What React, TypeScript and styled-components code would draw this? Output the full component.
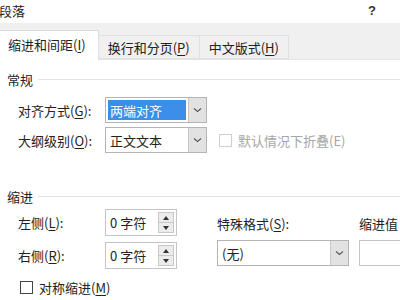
import * as React from 'react'
import styled, { createGlobalStyle } from 'styled-components'

const Global = createGlobalStyle`
  html, body { margin: 0; padding: 0; background: #fff; }
  body {
    width: 400px;
    height: 300px;
    overflow: hidden;
    font-family: "Noto Sans CJK SC", "Microsoft YaHei", sans-serif;
    font-size: 13px;
    color: #1a1a1a;
  }
`

function Chevron() {
    return (
        <svg width="9" height="6" viewBox="0 0 9 6">
            <path d="M1 1.5 L4.5 4.5 L8 1.5" fill="none" stroke="#555" strokeWidth="1.1" />
        </svg>
    )
}

function Combo({ value, width, selected }: { value: string; width: number; selected?: boolean }) {
    return (
        <ComboBox style={{ width }}>
            <ComboText $selected={selected}>
                <span>{value}</span>
            </ComboText>
            <DropButton>
                <Chevron />
            </DropButton>
        </ComboBox>
    )
}

function Spin({ value }: { value: string }) {
    return (
        <SpinBox>
            <SpinText>{value}</SpinText>
            <SpinButtons>
                <SpinHalf>
                    <svg width="6" height="4" viewBox="0 0 6 4"><path d="M0 4 L3 0 L6 4 Z" fill="#333" /></svg>
                </SpinHalf>
                <SpinHalf>
                    <svg width="6" height="4" viewBox="0 0 6 4"><path d="M0 0 L3 4 L6 0 Z" fill="#333" /></svg>
                </SpinHalf>
            </SpinButtons>
        </SpinBox>
    )
}

function App() {
    return (
        <Dialog>
            <Global />
            <TitleBar>
                <Title>段落</Title>
                <Help>?</Help>
            </TitleBar>
            <TabStrip>
                <Tab $active>缩进和间距(<u>I</u>)</Tab>
                <Tab>换行和分页(<u>P</u>)</Tab>
                <Tab>中文版式(<u>H</u>)</Tab>
            </TabStrip>
            <Content>
                <GroupHead>
                    <span>常规</span>
                    <Rule />
                </GroupHead>
                <FieldRow>
                    <Label>对齐方式(<u>G</u>):</Label>
                    <Combo value="两端对齐" width={102} selected />
                </FieldRow>
                <FieldRow $gap={4}>
                    <Label>大纲级别(<u>O</u>):</Label>
                    <Combo value="正文文本" width={102} />
                    <CheckLabel $disabled>
                        <Box $disabled />
                        <span>默认情况下折叠(E)</span>
                    </CheckLabel>
                </FieldRow>

                <GroupHead $top={36}>
                    <span>缩进</span>
                    <Rule />
                </GroupHead>
                <IndentGrid>
                    <SideCol>
                        <FieldRow $gap={0}>
                            <Label>左侧(<u>L</u>):</Label>
                            <Spin value="0 字符" />
                        </FieldRow>
                        <FieldRow $gap={6}>
                            <Label>右侧(<u>R</u>):</Label>
                            <Spin value="0 字符" />
                        </FieldRow>
                    </SideCol>
                    <StackCol $left={40}>
                        <SmallLabel>特殊格式(<u>S</u>):</SmallLabel>
                        <Combo value="(无)" width={132} />
                    </StackCol>
                    <StackCol $left={10}>
                        <SmallLabel>缩进值</SmallLabel>
                        <EmptyBox />
                    </StackCol>
                </IndentGrid>
                <CheckLabel $top={9} $left={20}>
                    <Box />
                    <span>对称缩进(<u>M</u>)</span>
                </CheckLabel>
            </Content>
        </Dialog>
    )
}

export default App

const Dialog = styled.div`
    width: 400px;
    height: 300px;
    overflow: hidden;
    background: #fff;
`
const TitleBar = styled.div`
    height: 23px;
    display: flex;
    align-items: center;
    justify-content: space-between;
    padding: 0 24px 2px 0;
    box-sizing: border-box;
`
const Title = styled.div`
    margin-left: -1px;
    font-size: 13px;
    color: #222;
`
const Help = styled.div`
    font-family: "Liberation Sans", Arial, sans-serif;
    font-size: 13px;
    font-weight: bold;
    color: #333;
`
const TabStrip = styled.div`
    height: 37px;
    background: #f0f0f0;
    display: flex;
    align-items: flex-end;
    border-bottom: 1px solid #e3e3e3;
    box-sizing: border-box;
`
const Tab = styled.div<{ $active?: boolean }>`
    height: ${p => (p.$active ? 30 : 24)}px;
    margin-bottom: ${p => (p.$active ? -1 : 0)}px;
    padding: ${p => (p.$active ? '0 12px 0 8px' : '0 9px')};
    display: flex;
    align-items: center;
    padding-bottom: ${p => (p.$active ? 3 : 0)}px;
    box-sizing: border-box;
    background: ${p => (p.$active ? '#fff' : '#f0f0f0')};
    border: 1px solid ${p => (p.$active ? '#d9d9d9' : '#e0e0e0')};
    border-bottom: ${p => (p.$active ? 'none' : '1px solid #e0e0e0')};
    border-left: ${p => (p.$active ? 'none' : '1px solid #e0e0e0')};
    margin-left: ${p => (p.$active ? 0 : -1)}px;
    font-size: 13px;
    color: #222;
    u { text-underline-offset: 2px; }
`
const Content = styled.div`
    padding: 12px 0 0 0;
`
const GroupHead = styled.div<{ $top?: number }>`
    display: flex;
    align-items: center;
    gap: 5px;
    height: 14px;
    margin-top: ${p => p.$top ?? 0}px;
    padding-left: 7px;
    color: #222;
`
const Rule = styled.div`
    flex: 1;
    height: 1px;
    background: #e3e3e3;
`
const FieldRow = styled.div<{ $gap?: number }>`
    display: flex;
    align-items: center;
    margin-top: ${p => p.$gap ?? 11}px;
    padding-left: 18px;
`
const Label = styled.div`
    width: 87px;
    color: #222;
    u { text-underline-offset: 2px; }
`
const SmallLabel = styled.div`
    height: 17px;
    line-height: 17px;
    margin-bottom: 8px;
    white-space: nowrap;
    color: #222;
    u { text-underline-offset: 2px; }
`
const ComboBox = styled.div`
    height: 26px;
    display: flex;
    border: 1px solid #b4b4b4;
    box-sizing: border-box;
    background: #fff;
`
const ComboText = styled.div<{ $selected?: boolean }>`
    flex: 1;
    padding: 2px;
    display: flex;
    span {
        flex: 1;
        display: flex;
        align-items: center;
        padding-left: 2px;
        background: ${p => (p.$selected ? '#3b8fe8' : 'transparent')};
        color: ${p => (p.$selected ? '#fff' : '#222')};
    }
`
const DropButton = styled.div`
    width: 17px;
    display: flex;
    align-items: center;
    justify-content: center;
    background: #e2e2e2;
    border-left: 1px solid #c8c8c8;
`
const CheckLabel = styled.label<{ $disabled?: boolean; $top?: number; $left?: number }>`
    display: flex;
    align-items: center;
    gap: 6px;
    margin-left: ${p => p.$left ?? 12}px;
    margin-top: ${p => p.$top ?? 0}px;
    color: ${p => (p.$disabled ? '#a6a6a6' : '#222')};
    u { text-underline-offset: 2px; }
`
const Box = styled.span<{ $disabled?: boolean }>`
    width: 11px;
    height: 11px;
    border: 1px solid ${p => (p.$disabled ? '#cfcfcf' : '#444')};
    background: #fff;
`
const IndentGrid = styled.div`
    display: flex;
    margin-top: 6px;
`
const SideCol = styled.div`
    display: flex;
    flex-direction: column;
`
const StackCol = styled.div<{ $left: number }>`
    display: flex;
    flex-direction: column;
    margin-left: ${p => p.$left}px;
    padding-top: 6px;
`
const SpinBox = styled.div`
    width: 72px;
    height: 27px;
    display: flex;
    border: 1px solid #c4c4c4;
    box-sizing: border-box;
    padding: 2px;
    background: #fff;
`
const SpinText = styled.div`
    flex: 1;
    display: flex;
    align-items: center;
    padding-left: 2px;
    color: #222;
`
const SpinButtons = styled.div`
    width: 14px;
    display: flex;
    flex-direction: column;
    border: 1px solid #c8c8c8;
    background: #ececec;
`
const SpinHalf = styled.div`
    flex: 1;
    display: flex;
    align-items: center;
    justify-content: center;
    & + & { border-top: 1px solid #c8c8c8; }
`
const EmptyBox = styled.div`
    width: 60px;
    height: 26px;
    border: 1px solid #c4c4c4;
    box-sizing: border-box;
`
